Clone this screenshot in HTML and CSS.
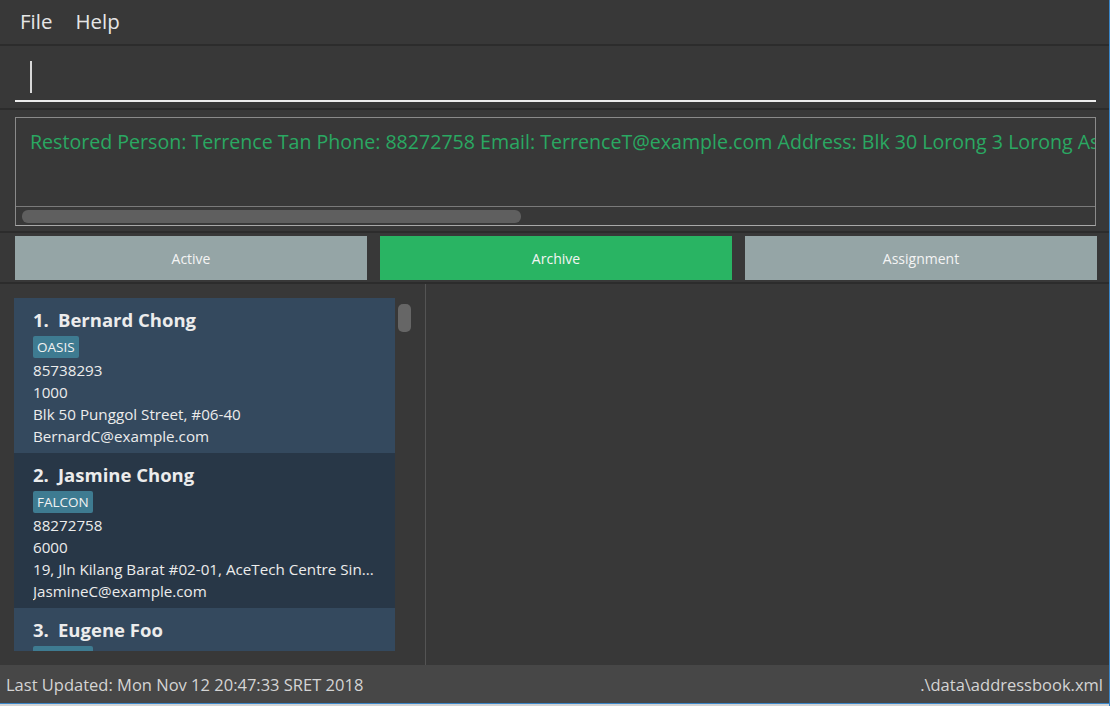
FILE: index.html
```html
<!DOCTYPE html>
<html>
<head>
<meta charset="utf-8">
<link rel="stylesheet" href="styles.css">
</head>
<body>
<div class="app">
  <div class="menubar">
    <span class="menu-item">File</span>
    <span class="menu-item">Help</span>
  </div>
  <div class="command-pane">
    <div class="command-field"><span class="caret"></span></div>
  </div>
  <div class="result-pane">
    <div class="result-box">
      <div class="result-text">Restored Person: Terrence Tan Phone: 88272758 Email: TerrenceT@example.com Address: Blk 30 Lorong 3 Lorong Asrama</div>
      <div class="hscroll"><div class="hthumb"></div></div>
    </div>
  </div>
  <div class="tabs-pane">
    <div class="tab">Active</div>
    <div class="tab tab-selected">Archive</div>
    <div class="tab">Assignment</div>
  </div>
  <div class="main">
    <div class="list-panel">
      <div class="list-view">
        <div class="card card-odd">
          <div class="name"><span class="idx">1.</span>Bernard Chong</div>
          <div class="tags"><span class="tag">OASIS</span></div>
          <div class="line">85738293</div>
          <div class="line">1000</div>
          <div class="line">Blk 50 Punggol Street, #06-40</div>
          <div class="line">BernardC@example.com</div>
        </div>
        <div class="card card-even">
          <div class="name"><span class="idx">2.</span>Jasmine Chong</div>
          <div class="tags"><span class="tag">FALCON</span></div>
          <div class="line">88272758</div>
          <div class="line">6000</div>
          <div class="line">19, Jln Kilang Barat #02-01, AceTech Centre Sin...</div>
          <div class="line">JasmineC@example.com</div>
        </div>
        <div class="card card-odd">
          <div class="name"><span class="idx">3.</span>Eugene Foo</div>
          <div class="tags"><span class="tag">FALCON</span></div>
          <div class="line">91234567</div>
          <div class="line">3000</div>
        </div>
      </div>
      <div class="vscroll"><div class="vthumb"></div></div>
    </div>
    <div class="detail-panel"></div>
  </div>
  <div class="statusbar">
    <span>Last Updated: Mon Nov 12 20:47:33 SRET 2018</span>
    <span>.\data\addressbook.xml</span>
  </div>
  <div class="window-bottom"></div>
</div>
</body>
</html>
```
FILE: styles.css
```css
html, body {
  margin: 0;
  padding: 0;
  background: #383838;
}
body {
  width: 1110px;
  height: 706px;
  overflow: hidden;
  font-family: "Open Sans", "Noto Sans", sans-serif;
}
.app {
  width: 1109px;
  height: 706px;
  border-right: 1px solid #3a86c8;
  display: flex;
  flex-direction: column;
  background: #383838;
}
.menubar {
  flex: none;
  display: flex;
  align-items: center;
  gap: 23px;
  padding-left: 20px;
  border-bottom: 2px solid #2c2c2c;
  box-sizing: border-box;
  height: 46px;
}
.menu-item {
  color: #e6e6e6;
  font-size: 20.5px;
  margin-top: -2px;
}
.command-pane {
  flex: none;
  height: 64px;
  box-sizing: border-box;
  padding: 14px 13px 0 15px;
  border-bottom: 2px solid #2c2c2c;
}
.command-field {
  height: 40px;
  border-bottom: 2px solid #ececec;
  position: relative;
}
.caret {
  position: absolute;
  left: 15px;
  top: 1px;
  width: 2px;
  height: 32px;
  background: #d8d8d8;
}
.result-pane {
  flex: none;
  height: 123px;
  box-sizing: border-box;
  padding: 7px 13px 0 15px;
  border-bottom: 2px solid #2c2c2c;
}
.result-box {
  height: 109px;
  box-sizing: border-box;
  border: 1px solid #8a8a8a;
  border-bottom-color: #a8a8a8;
  display: flex;
  flex-direction: column;
}
.result-text {
  flex: 1;
  color: #2aa862;
  font-size: 19.6px;
  white-space: nowrap;
  overflow: hidden;
  padding: 10px 0 0 14px;
}
.hscroll {
  flex: none;
  height: 19px;
  border-top: 1px solid #7a7a7a;
  box-sizing: border-box;
  padding: 3px 6px;
}
.hthumb {
  width: 499px;
  height: 13px;
  background: #5f5f5f;
  border-radius: 6px;
}
.tabs-pane {
  flex: none;
  height: 51px;
  box-sizing: border-box;
  padding: 3px 12px 3px 15px;
  display: flex;
  gap: 13px;
  border-bottom: 2px solid #2c2c2c;
}
.tab {
  width: 352px;
  flex: none;
  height: 44px;
  background: #95a5a6;
  color: #f4f4f4;
  font-size: 14px;
  display: flex;
  align-items: center;
  justify-content: center;
}
.tab-selected {
  background: #29b463;
}
.main {
  flex: 1;
  display: flex;
  min-height: 0;
}
.list-panel {
  width: 426px;
  flex: none;
  border-right: 1px solid #545454;
  box-sizing: border-box;
  padding: 14px 0 14px 14px;
  display: flex;
  gap: 3px;
}
.list-view {
  width: 381px;
  overflow: hidden;
}
.card {
  height: 155px;
  box-sizing: border-box;
  padding: 9px 8px 0 19px;
  color: #ececec;
}
.card-odd { background: #34495e; }
.card-even { background: #283747; }
.name {
  font-size: 18.5px;
  font-weight: bold;
  line-height: 26px;
  height: 26px;
  white-space: nowrap;
}
.idx {
  display: inline-block;
  width: 25px;
}
.tags {
  margin-top: 3px;
  height: 22px;
  display: flex;
}
.tag {
  background: #3e7b91;
  color: #f2f2f2;
  font-size: 13.5px;
  line-height: 22px;
  padding: 0 4px;
  border-radius: 2px;
}
.line {
  font-size: 15.2px;
  line-height: 22px;
  white-space: nowrap;
  overflow: hidden;
  padding-top: 1px;
  margin-bottom: -1px;
}
.vscroll {
  width: 14px;
  padding-top: 6px;
}
.vthumb {
  width: 13px;
  height: 28px;
  background: #666666;
  border-radius: 5px;
}
.detail-panel {
  flex: 1;
}
.statusbar {
  flex: none;
  height: 38px;
  background: #474747;
  display: flex;
  justify-content: space-between;
  align-items: center;
  padding: 0 6px;
  color: #d4d4d4;
  font-size: 16.5px;
  border-bottom: 1px solid #3a86c8;
}
.window-bottom {
  flex: none;
  height: 2px;
  background: #d4d4d4;
}
```
